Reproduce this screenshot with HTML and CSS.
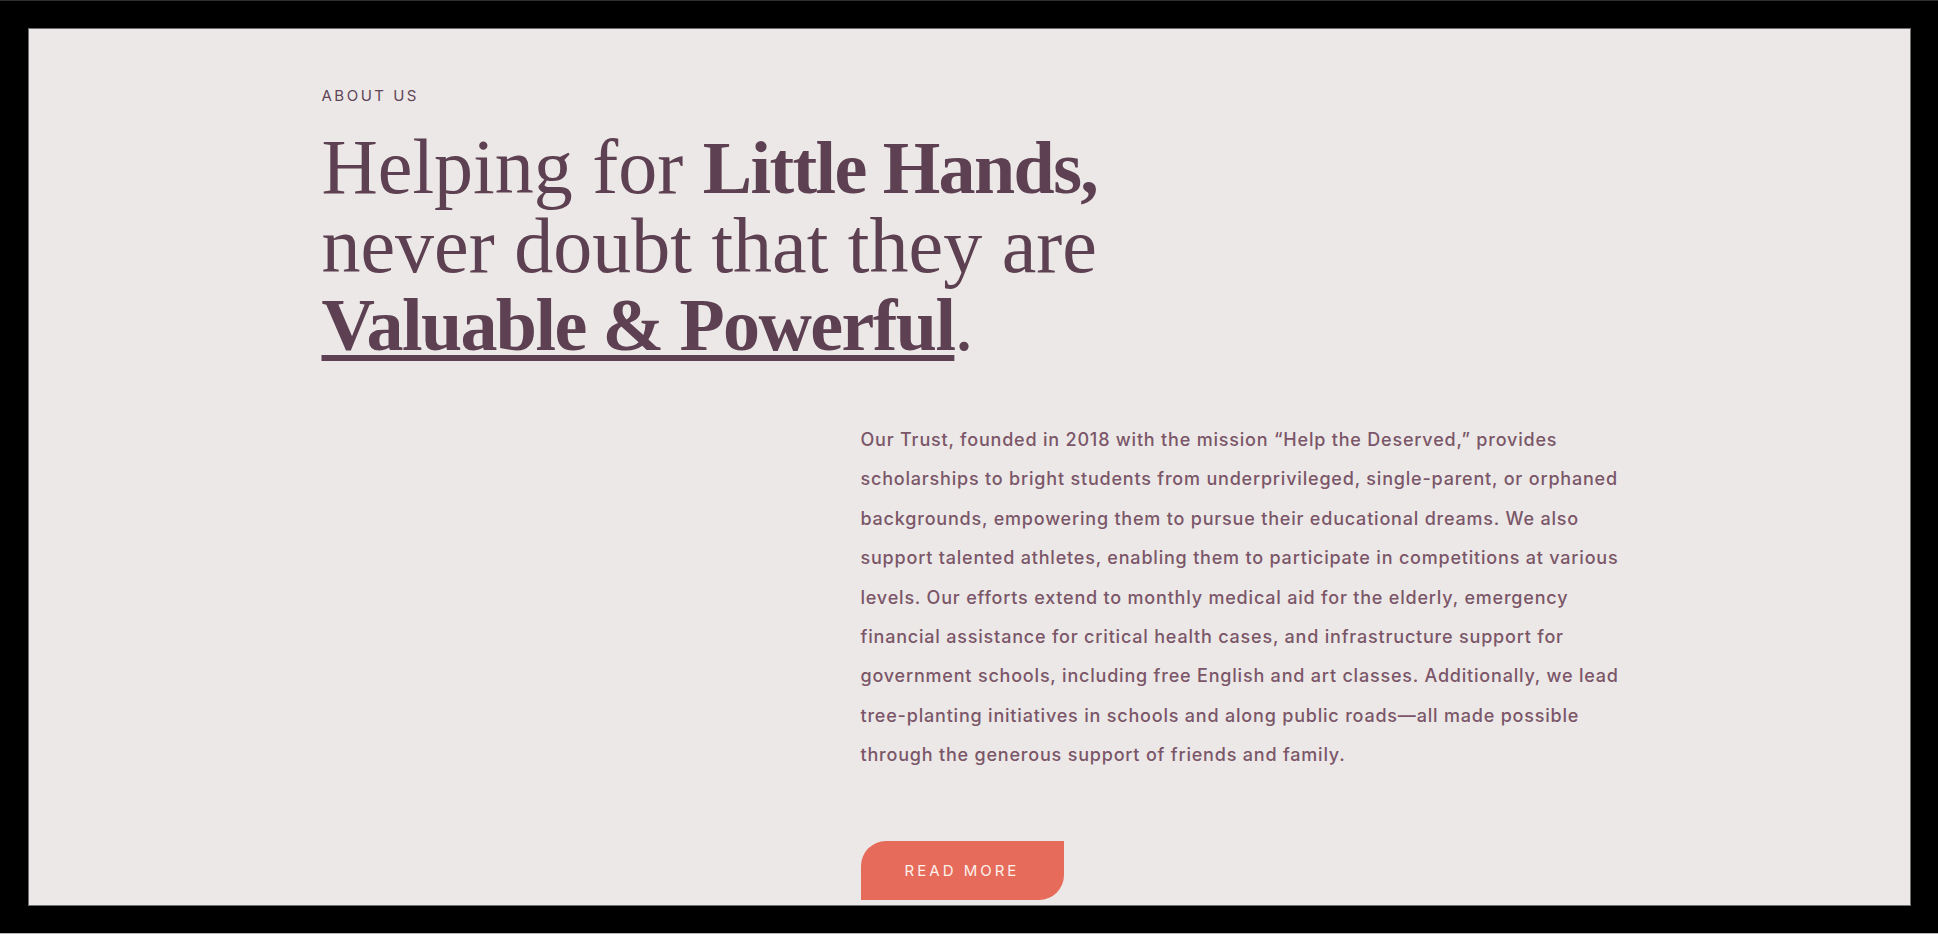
FILE: index.html
```html
<!DOCTYPE html>
<html lang="en">
<head>
<meta charset="utf-8">
<title>About Us</title>
<link rel="stylesheet" href="styles.css">
</head>
<body>
  <div class="screen">
    <div class="window">
      <section class="about">
        <div class="container">
          <p class="eyebrow">ABOUT US</p>
          <h2 class="title">Helping for <strong>Little Hands,</strong><br>never doubt that they are<br><strong class="underlined">Valuable &amp; Powerful</strong>.</h2>
          <div class="grid">
            <div class="media"></div>
            <div class="content">
              <p class="text">Our Trust, founded in 2018 with the mission “Help the Deserved,” provides scholarships to bright students from underprivileged, single-parent, or orphaned backgrounds, empowering them to pursue their educational dreams. We also support talented athletes, enabling them to participate in competitions at various levels. Our efforts extend to monthly medical aid for the elderly, emergency financial assistance for critical health cases, and infrastructure support for government schools, including free English and art classes. Additionally, we lead tree-planting initiatives in schools and along public roads—all made possible through the generous support of friends and family.</p>
              <a class="btn" href="#">READ MORE</a>
            </div>
          </div>
        </div>
      </section>
    </div>
  </div>
</body>
</html>
```
FILE: styles.css
```css
* { box-sizing: border-box; }
html, body { margin: 0; padding: 0; background: #000; }
.screen {
  width: 1938px;
  height: 934px;
  background: #000;
  border-top: 1px solid #2e2e2e;
  border-bottom: 1px solid #b5b5b5;
  padding: 27px 27px 0 28px;
}
.window {
  width: 1883px;
  height: 878px;
  border: 1px solid #6f6f6f;
  background: #ece8e7;
  overflow: hidden;
}
.container {
  width: 1296px;
  margin: 0 auto;
  padding-top: 56px;
}
.eyebrow {
  margin: 0;
  font-family: Inter, "Liberation Sans", sans-serif;
  font-size: 15px;
  line-height: 22px;
  letter-spacing: 2.5px;
  color: #5f4557;
}
.title {
  margin: 21px 0 0;
  font-family: "Liberation Serif", serif;
  font-weight: 400;
  font-size: 78px;
  line-height: 78px;
  color: #5d4051;
}
.title strong {
  font-weight: 700;
  font-size: 74px;
  letter-spacing: -1.6px;
}
.underlined {
  text-decoration: underline;
  text-decoration-thickness: 6px;
  text-underline-offset: 5px;
}
.grid {
  display: grid;
  grid-template-columns: 539px 1fr;
  margin-top: 56px;
}
.content {
  min-width: 0;
}
.text {
  margin: 0;
  width: 772px;
  font-family: Inter, "Liberation Sans", sans-serif;
  font-weight: 500;
  font-size: 18px;
  line-height: 39.4px;
  letter-spacing: 0.8px;
  color: #7a5668;
}
.btn {
  margin-top: 66px;
  display: inline-flex;
  align-items: center;
  justify-content: center;
  width: 203px;
  height: 59px;
  background: #e66b5a;
  border-radius: 25px 0 25px 0;
  color: #fdf1ec;
  text-decoration: none;
  font-family: Inter, "Liberation Sans", sans-serif;
  font-size: 15px;
  letter-spacing: 3px;
}
```
